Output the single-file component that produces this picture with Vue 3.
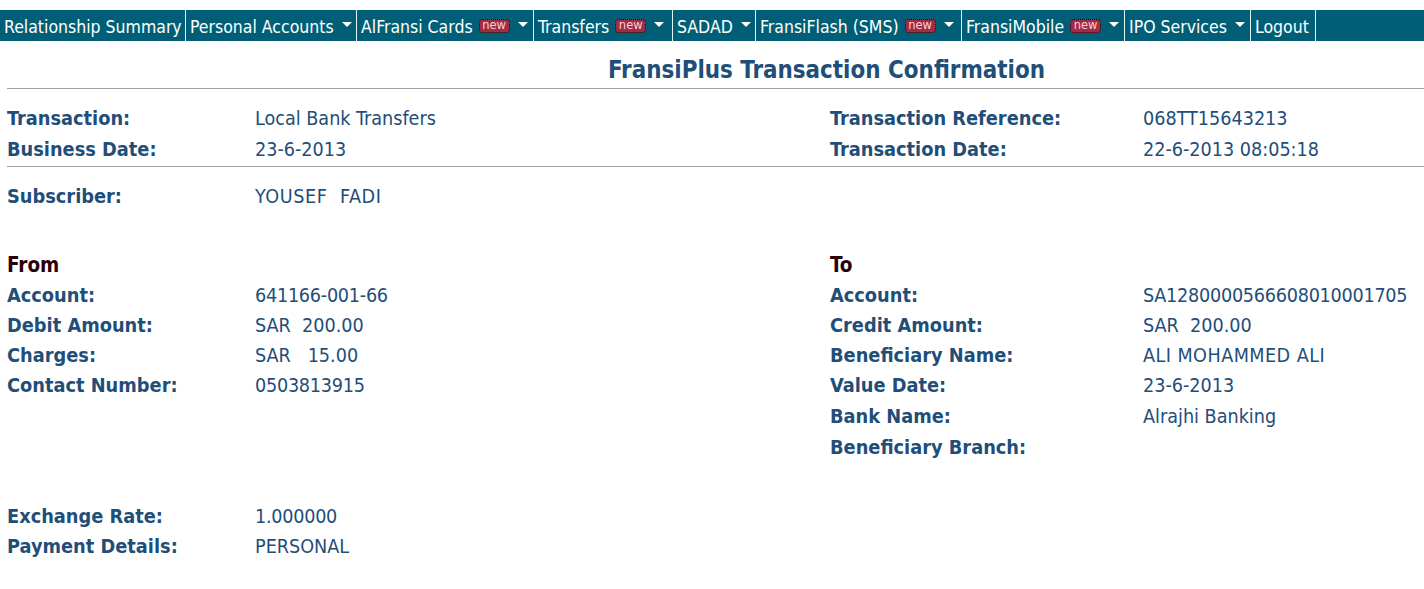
<script setup>
const menu = [
  { label: 'Relationship Summary', w: 186 },
  { label: 'Personal Accounts', w: 171, caret: true },
  { label: 'AlFransi Cards', w: 177, caret: true, isNew: true },
  { label: 'Transfers', w: 139, caret: true, isNew: true },
  { label: 'SADAD', w: 83, caret: true },
  { label: 'FransiFlash (SMS)', w: 206, caret: true, isNew: true },
  { label: 'FransiMobile', w: 163, caret: true, isNew: true },
  { label: 'IPO Services', w: 126, caret: true },
  { label: 'Logout', w: 65 }
]
const fromRows = [
  ['Account:', '641166-001-66', 'num'],
  ['Debit Amount:', 'SAR\u00a0\u00a0200.00'],
  ['Charges:', 'SAR\u00a0\u00a0\u00a015.00'],
  ['Contact Number:', '0503813915', 'num']
]
const toRows = [
  ['Account:', 'SA1280000566608010001705', 'num'],
  ['Credit Amount:', 'SAR\u00a0\u00a0200.00'],
  ['Beneficiary Name:', 'ALI MOHAMMED ALI', 'caps'],
  ['Value Date:', '23-6-2013'],
  ['Bank Name:', 'Alrajhi Banking'],
  ['Beneficiary Branch:', '']
]
</script>

<template>
  <div class="page">
    <nav class="nav">
      <div v-for="m in menu" :key="m.label" class="item" :style="{ width: m.w + 'px' }">
        <span>{{ m.label }}</span>
        <span v-if="m.isNew" class="new">new</span>
        <span v-if="m.caret" class="caret"></span>
      </div>
    </nav>
    <h1 class="title">FransiPlus Transaction Confirmation</h1>
    <hr class="rule" />
    <div class="pair head">
      <div class="col left">
        <div class="row"><b>Transaction:</b><span>Local Bank Transfers</span></div>
        <div class="row"><b>Business Date:</b><span>23-6-2013</span></div>
      </div>
      <div class="col right">
        <div class="row"><b>Transaction Reference:</b><span>068TT15643213</span></div>
        <div class="row"><b>Transaction Date:</b><span>22-6-2013 08:05:18</span></div>
      </div>
    </div>
    <hr class="rule second" />
    <div class="col left single">
      <div class="row"><b>Subscriber:</b><span class="caps wide">YOUSEF&nbsp;&nbsp;FADI</span></div>
    </div>
    <div class="pair parties">
      <div class="col left">
        <div class="row"><strong class="party">From</strong></div>
        <div v-for="r in fromRows" :key="r[0]" class="row"><b>{{ r[0] }}</b><span :class="r[2]">{{ r[1] }}</span></div>
      </div>
      <div class="col right">
        <div class="row"><strong class="party">To</strong></div>
        <div v-for="r in toRows" :key="r[0]" class="row"><b>{{ r[0] }}</b><span :class="r[2]">{{ r[1] }}</span></div>
      </div>
    </div>
    <div class="col left extra">
      <div class="row"><b>Exchange Rate:</b><span class="num">1.000000</span></div>
      <div class="row"><b>Payment Details:</b><span>PERSONAL</span></div>
    </div>
  </div>
</template>

<style>
html, body { margin: 0; background: #fff; }
</style>
<style scoped>
.page {
  font-family: "DejaVu Sans", sans-serif;
  font-stretch: condensed;
  font-size: 19.6px;
  color: #1f4e79;
  height: 589px;
  overflow: hidden;
  padding-top: 10px;
  box-sizing: border-box;
}
.nav {
  display: flex;
  height: 31px;
  background: #005f77;
  color: #fff;
  font-size: 17.5px;
}
.item {
  box-sizing: border-box;
  display: flex;
  align-items: center;
  padding: 2px 0 0 4px;
  border-right: 1px solid #e6f4f6;
  white-space: nowrap;
}
.new {
  width: 31px;
  height: 14px;
  margin: 0 0 1px 6px;
  box-sizing: border-box;
  border-radius: 4px;
  background: #a12c45;
  border: 1px dotted #1a0409;
  color: #f7d0d0;
  font-size: 11.5px;
  font-stretch: normal;
  line-height: 11px;
  text-align: center;
  flex: none;
}
.caret {
  width: 0;
  height: 0;
  margin: 0 0 5px 8px;
  border-left: 5px solid transparent;
  border-right: 5px solid transparent;
  border-top: 5px solid #fff;
  flex: none;
}
.title {
  margin: 15px 0 0;
  padding-left: 229px;
  text-align: center;
  font-size: 23.9px;
  line-height: 28px;
  font-weight: bold;
}
.rule {
  margin: 4px 0 0 7px;
  border: 0;
  height: 1px;
  background: #a0a0a0;
}
.rule.second { margin-top: 0; }
.pair { display: flex; }
.head { margin-top: 15px; }
.col { padding-left: 7px; }
.left { width: 823px; box-sizing: border-box; }
.right { flex: 1; box-sizing: border-box; }
.row { display: flex; height: 30px; line-height: 30px; white-space: nowrap; }
.head .row,
.parties .row:nth-child(1),
.parties .row:nth-child(5),
.parties .row:nth-child(6) { height: 31px; }
.row b { width: 248px; flex: none; font-size: 19.8px; }
.right .row b { width: 313px; }
.num { letter-spacing: -0.25px; }
.caps { letter-spacing: 0.45px; }
.caps.wide { letter-spacing: 0.6px; }
.single { margin-top: 15px; }
.parties { margin-top: 38px; }
.party { color: #2a0008; font-size: 20.5px; }
.extra { margin-top: 39px; }
</style>
